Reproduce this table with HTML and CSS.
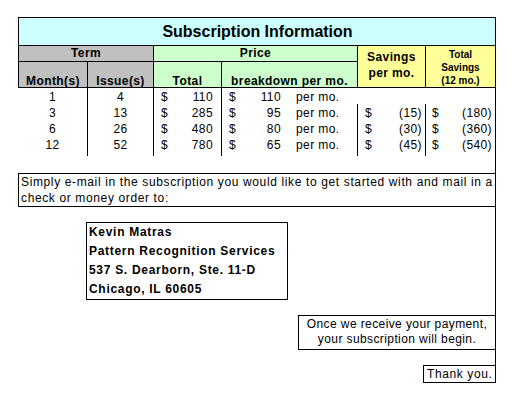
FILE: index.html
```html
<!DOCTYPE html>
<html>
<head>
<meta charset="utf-8">
<link rel="stylesheet" href="styles.css">
</head>
<body>
<div class="sheet">
  <div class="grid">
    <div class="cell title">Subscription Information</div>
    <div class="cell hdr1 gray term">Term</div>
    <div class="cell hdr1 green price">Price</div>
    <div class="cell yellow sav">Savings<br>per mo.</div>
    <div class="cell yellow tsav">Total<br>Savings<br>(12 mo.)</div>
    <div class="cell hdr2 gray first">Month(s)</div>
    <div class="cell hdr2 gray">Issue(s)</div>
    <div class="cell hdr2 green">Total</div>
    <div class="cell hdr2 green">breakdown per mo.</div>

    <div class="cell d center">1</div>
    <div class="cell d center">4</div>
    <div class="cell d money pos"><span class="cur">$</span><span>110</span></div>
    <div class="cell d brk open"><span class="cur">$</span><span>110</span><span class="per">per mo.</span></div>
    <div class="cell d open"></div>
    <div class="cell d last"></div>

    <div class="cell d center">3</div>
    <div class="cell d center">13</div>
    <div class="cell d money pos"><span class="cur">$</span><span>285</span></div>
    <div class="cell d brk"><span class="cur">$</span><span>95</span><span class="per">per mo.</span></div>
    <div class="cell d money neg"><span class="cur">$</span><span>(15)</span></div>
    <div class="cell d money neg last"><span class="cur">$</span><span>(180)</span></div>

    <div class="cell d center">6</div>
    <div class="cell d center">26</div>
    <div class="cell d money pos"><span class="cur">$</span><span>480</span></div>
    <div class="cell d brk"><span class="cur">$</span><span>80</span><span class="per">per mo.</span></div>
    <div class="cell d money neg"><span class="cur">$</span><span>(30)</span></div>
    <div class="cell d money neg last"><span class="cur">$</span><span>(360)</span></div>

    <div class="cell d center">12</div>
    <div class="cell d center">52</div>
    <div class="cell d money pos"><span class="cur">$</span><span>780</span></div>
    <div class="cell d brk"><span class="cur">$</span><span>65</span><span class="per">per mo.</span></div>
    <div class="cell d money neg"><span class="cur">$</span><span>(45)</span></div>
    <div class="cell d money neg last"><span class="cur">$</span><span>(540)</span></div>
  </div>

  <p class="note">Simply e-mail in the subscription you would like to get started with and mail in a<br>check or money order to:</p>

  <div class="addr">Kevin Matras<br>Pattern Recognition Services<br>537 S. Dearborn, Ste. 11-D<br>Chicago, IL 60605</div>

  <div class="once">Once we receive your payment,<br>your subscription will begin.</div>

  <div class="thanks">Thank you.</div>
</div>
</body>
</html>
```

FILE: styles.css
```css
html, body {
  margin: 0;
  padding: 0;
  background: #ffffff;
}

body {
  font-family: "Liberation Sans", Arial, sans-serif;
  font-size: 12px;
  color: #000000;
}

.sheet {
  margin: 17px 0 0 18px;
  width: 478px;
  box-sizing: border-box;
  border-right: 1px solid #000;
  display: flex;
  flex-direction: column;
}

.grid {
  display: grid;
  grid-template-columns: 70px 66px 68px 136px 68px 69px;
  grid-template-rows: 29px 16px 26px 16px 16px 16px 20px;
}

.cell {
  box-sizing: border-box;
  white-space: nowrap;
}

.title {
  grid-column: 1 / -1;
  background: #ccffff;
  border-top: 1px solid #000;
  border-left: 1px solid #000;
  border-bottom: 1px solid #000;
  font-weight: bold;
  font-size: 16px;
  display: flex;
  align-items: center;
  justify-content: center;
  padding-left: 1px;
}

.gray { background: #c0c0c0; }
.green { background: #ccffcc; }
.yellow { background: #ffff99; }

.hdr1, .hdr2, .sav {
  font-weight: bold;
  letter-spacing: 0.4px;
  border-right: 1px solid #000;
  border-bottom: 1px solid #000;
  text-align: center;
}

.hdr1 {
  line-height: 15px;
}

.term {
  grid-column: 1 / 3;
  border-left: 1px solid #000;
}

.price {
  grid-column: 3 / 5;
}

.hdr2 {
  display: flex;
  align-items: flex-end;
  justify-content: center;
  line-height: 12px;
}

.first {
  border-left: 1px solid #000;
}

.sav {
  grid-column: 5;
  grid-row: 2 / 4;
  line-height: 16px;
  padding-top: 3px;
}

.tsav {
  grid-column: 6;
  grid-row: 2 / 4;
  border-bottom: 1px solid #000;
  font-weight: bold;
  font-size: 10px;
  line-height: 13px;
  display: flex;
  align-items: center;
  justify-content: center;
  text-align: center;
  padding-top: 1px;
}

.d {
  border-right: 1px solid #000;
  line-height: 18px;
  letter-spacing: 0.4px;
}

.d.last {
  border-right: none;
}

.d.open {
  border-right-color: transparent;
}

.center {
  text-align: center;
}

.money {
  display: flex;
  justify-content: space-between;
  padding-left: 7px;
}

.money.pos {
  padding-right: 8px;
}

.money.neg {
  padding-right: 3px;
}

.money.neg.last {
  padding-left: 6px;
}

.brk {
  display: flex;
  padding-left: 7px;
}

.brk .cur {
  flex: 1;
}

.per {
  width: 76px;
  box-sizing: border-box;
  padding-left: 15px;
}

.note {
  margin: 17px 0 0 0;
  border-top: 1px solid #000;
  border-left: 1px solid #000;
  border-bottom: 1px solid #000;
  padding: 0 2px;
  line-height: 16px;
  letter-spacing: 0.63px;
  white-space: nowrap;
  overflow: hidden;
}

.addr {
  margin: 15px 0 0 68px;
  width: 202px;
  box-sizing: border-box;
  border: 1px solid #000;
  padding: 0 2px;
  font-weight: bold;
  line-height: 19px;
  letter-spacing: 0.7px;
  white-space: nowrap;
}

.once {
  align-self: flex-end;
  margin-top: 15px;
  width: 197px;
  box-sizing: border-box;
  border-top: 1px solid #000;
  border-left: 1px solid #000;
  border-bottom: 1px solid #000;
  padding: 1px 0 2px;
  text-align: center;
  line-height: 15px;
  letter-spacing: 0.4px;
  white-space: nowrap;
}

.thanks {
  align-self: flex-end;
  margin-top: 15px;
  width: 72px;
  box-sizing: border-box;
  border-top: 1px solid #000;
  border-left: 1px solid #000;
  border-bottom: 1px solid #000;
  padding-left: 3px;
  line-height: 16px;
  letter-spacing: 0.6px;
  white-space: nowrap;
}
```
